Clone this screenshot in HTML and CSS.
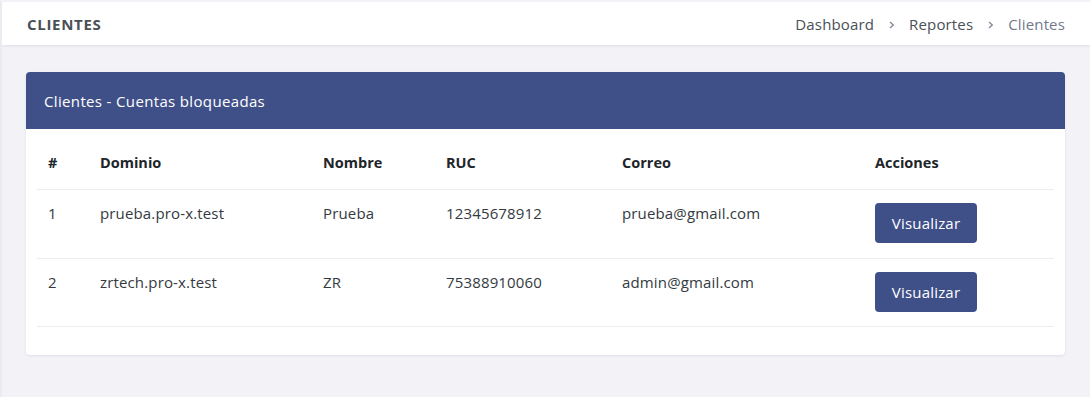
FILE: index.html
```html
<!DOCTYPE html>
<html lang="es">
<head>
<meta charset="utf-8">
<title>Clientes</title>
<link rel="stylesheet" href="styles.css">
</head>
<body>
<header class="topbar">
  <h1 class="page-title">CLIENTES</h1>
  <nav class="breadcrumb">
    <span class="crumb">Dashboard</span>
    <svg class="sep" viewBox="0 0 6 8" width="6" height="8"><path d="M1 1 L4.3 4 L1 7" fill="none" stroke="#7f8696" stroke-width="1.3"/></svg>
    <span class="crumb">Reportes</span>
    <svg class="sep" viewBox="0 0 6 8" width="6" height="8"><path d="M1 1 L4.3 4 L1 7" fill="none" stroke="#7f8696" stroke-width="1.3"/></svg>
    <span class="crumb current">Clientes</span>
  </nav>
</header>
<main class="content">
  <section class="card">
    <div class="card-header">Clientes - Cuentas bloqueadas</div>
    <div class="card-body">
      <table class="table">
        <colgroup>
          <col class="c1"><col class="c2"><col class="c3"><col class="c4"><col class="c5"><col class="c6">
        </colgroup>
        <thead>
          <tr><th>#</th><th>Dominio</th><th>Nombre</th><th>RUC</th><th>Correo</th><th>Acciones</th></tr>
        </thead>
        <tbody>
          <tr>
            <td>1</td><td>prueba.pro-x.test</td><td>Prueba</td><td>12345678912</td><td>prueba@gmail.com</td>
            <td><button class="btn">Visualizar</button></td>
          </tr>
          <tr>
            <td>2</td><td>zrtech.pro-x.test</td><td>ZR</td><td>75388910060</td><td>admin@gmail.com</td>
            <td><button class="btn">Visualizar</button></td>
          </tr>
        </tbody>
      </table>
    </div>
  </section>
</main>
</body>
</html>
```
FILE: styles.css
```css
* { box-sizing: border-box; }
html, body { margin: 0; padding: 0; }
body {
  background: #f2f2f7;
  font-family: "Open Sans", "Liberation Sans", sans-serif;
  color: #343a40;
  font-size: 15px;
  border-top: 2px solid #f2f2f7;
  border-left: 2px solid #ebebf1;
  min-height: 397px;
}
.topbar {
  background: #fff;
  height: 43px;
  display: flex;
  align-items: center;
  justify-content: space-between;
  padding: 0 25px 0 25px;
  box-shadow: 0 1px 3px rgba(18, 38, 63, 0.09);
}
.page-title {
  margin: 0;
  font-size: 15px;
  font-weight: 700;
  color: #495057;
  letter-spacing: 0.7px;
}
.breadcrumb {
  display: flex;
  align-items: center;
  font-size: 15px;
  letter-spacing: 0.15px;
  color: #495057;
}
.sep {
  margin: 2px 14px 0 15px;
  display: block;
}
.crumb.current { color: #74788d; }
.content {
  padding: 27px 25px 40px 24px;
}
.card {
  background: #fff;
  border-radius: 4px;
  box-shadow: 0 1px 3px rgba(18, 38, 63, 0.08);
  overflow: hidden;
}
.card-header {
  background: #3f5089;
  color: #fff;
  height: 57px;
  display: flex;
  align-items: center;
  padding: 0 18px;
  font-size: 15px;
  letter-spacing: 0.35px;
}
.card-body {
  padding: 12px 11px 28px 11px;
}
.table {
  width: 100%;
  border-collapse: collapse;
  table-layout: fixed;
}
.c1 { width: 52px; }
.c2 { width: 223px; }
.c3 { width: 123px; }
.c4 { width: 176px; }
.c5 { width: 253px; }
.c6 { width: auto; }
.table th {
  text-align: left;
  font-weight: 700;
  color: #212529;
  font-size: 14.5px;
  padding: 11px 11px 15px 11px;
  line-height: 22px;
  border-bottom: 1px solid #eaedf2;
}
.table td {
  vertical-align: top;
  padding: 12px 11px 11.5px 11px;
  line-height: 22px;
  font-size: 15px;
  letter-spacing: 0.15px;
  color: #343a40;
  border-bottom: 1px solid #eaedf2;
}
.btn {
  margin: 1px 0 3px 0;
  width: 102px;
  height: 40px;
  border: 0;
  border-radius: 4px;
  background: #3f5089;
  color: #fff;
  font-family: inherit;
  font-size: 15px;
  letter-spacing: 0.2px;
  display: block;
}
```
